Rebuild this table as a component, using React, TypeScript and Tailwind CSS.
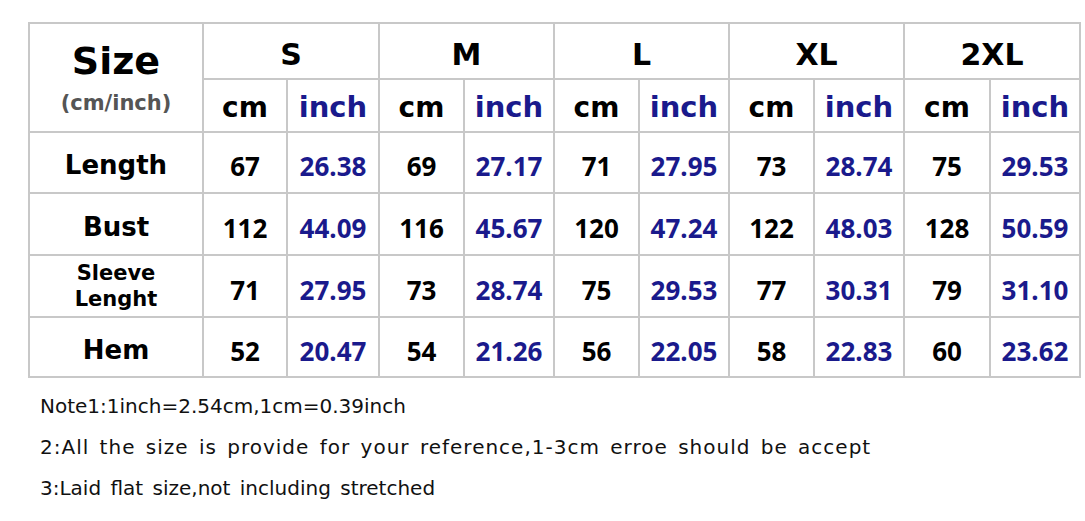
const sizes = ["S", "M", "L", "XL", "2XL"];

const rows: { label: string; small?: boolean; values: [string, string][] }[] = [
  {
    label: "Length",
    values: [["67", "26.38"], ["69", "27.17"], ["71", "27.95"], ["73", "28.74"], ["75", "29.53"]],
  },
  {
    label: "Bust",
    values: [["112", "44.09"], ["116", "45.67"], ["120", "47.24"], ["122", "48.03"], ["128", "50.59"]],
  },
  {
    label: "Sleeve Lenght",
    small: true,
    values: [["71", "27.95"], ["73", "28.74"], ["75", "29.53"], ["77", "30.31"], ["79", "31.10"]],
  },
  {
    label: "Hem",
    values: [["52", "20.47"], ["54", "21.26"], ["56", "22.05"], ["58", "22.83"], ["60", "23.62"]],
  },
];

// comic-ish headings (no Comic Sans here, DejaVu is the nearest width)
const comic = "font-['Comic_Sans_MS','DejaVu_Sans',sans-serif]";
const num = "font-['Noto_Sans','Open_Sans',sans-serif]";
const cell = "bg-white flex items-center justify-center";

export default function App() {
  return (
    <div className="w-[1085px] h-[521px] bg-white overflow-hidden pt-[22px] pl-[28px]">
      <div className="inline-grid grid-cols-[172px_82px_90px_83px_88px_83px_88px_83px_88px_84px_88px] grid-rows-[54px_51px_59px_60px_60px_58px] gap-[2px] p-[2px] bg-[#c8c8c8]">
        <div className={`${cell} ${comic} row-span-2 flex-col`}>
          <span className="text-[38px] font-bold leading-none text-black">Size</span>
          <span className="text-[21px] font-bold leading-none mt-[13px] text-[#555]">(cm/inch)</span>
        </div>
        {sizes.map((s) => (
          <div key={s} className={`${cell} ${comic} col-span-2 text-[30px] font-bold text-black pt-[6px]`}>
            {s}
          </div>
        ))}
        {sizes.map((s) => [
          <div key={s + "cm"} className={`${cell} ${comic} text-[28px] font-bold text-black pt-[5px]`}>
            cm
          </div>,
          <div key={s + "in"} className={`${cell} ${comic} text-[29px] font-bold text-[#1a1a8c] pt-[5px]`}>
            inch
          </div>,
        ])}
        {rows.map((r) => [
          <div
            key={r.label}
            className={`${cell} ${comic} text-center font-bold text-black ${r.small ? "text-[21px] leading-[26px] px-[40px]" : "text-[26px] pt-[6px]"}`}
          >
            {r.label}
          </div>,
          ...r.values.map(([cm, inch], i) => [
            <div key={r.label + i + "c"} className={`${cell} ${num} text-[26px] font-bold text-black pt-[8px]`}>
              {cm}
            </div>,
            <div key={r.label + i + "i"} className={`${cell} ${num} text-[26px] font-bold text-[#1a1a8c] pt-[8px]`}>
              {inch}
            </div>,
          ]),
        ])}
      </div>
      <div className={`${comic} mt-[15px] ml-[12px] flex flex-col gap-[14px] text-[20px] leading-[27px] text-[#111] [word-spacing:3px]`}>
        <p>Note1:1inch=2.54cm,1cm=0.39inch</p>
        <p className="tracking-[1px]">2:All the size is provide for your reference,1-3cm erroe should be accept</p>
        <p>3:Laid flat size,not including stretched</p>
      </div>
    </div>
  );
}
